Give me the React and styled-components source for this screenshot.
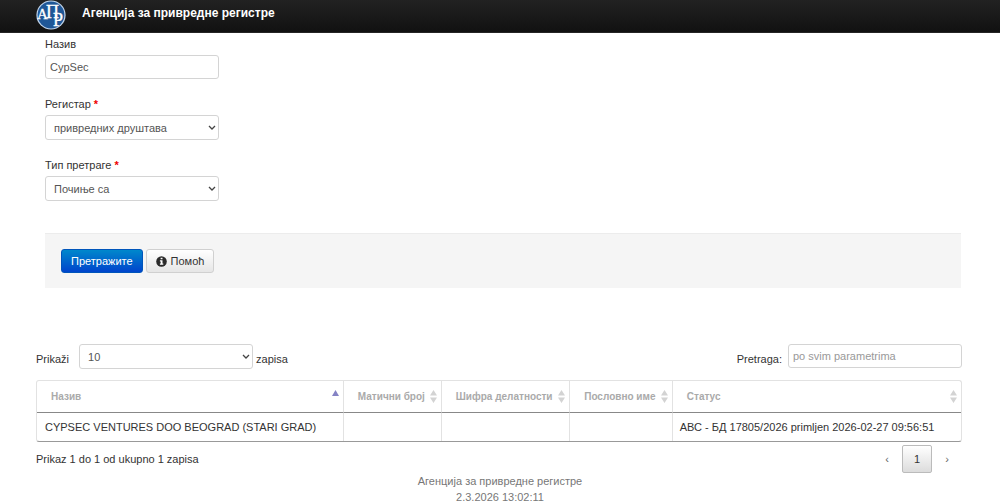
import { useState } from 'react';

import styled, { createGlobalStyle } from 'styled-components';

const columns = [
  { name: 'Назив', width: '33.1%' },
  { name: 'Матични број', width: '10.6%' },
  { name: 'Шифра делатности', width: '13.9%' },
  { name: 'Пословно име', width: '11.1%' },
  { name: 'Статус', width: '31.3%' },
];

const rows = [
  ['CYPSEC VENTURES DOO BEOGRAD (STARI GRAD)', '', '', '', 'АВС - БД 17805/2026 primljen 2026-02-27 09:56:51'],
];

const Logo = () => (
  <svg width="30" height="30" viewBox="0 0 30 30" aria-hidden="true">
    <circle cx="15" cy="15" r="14.6" fill="#c3d6ec" />
    <circle cx="15" cy="15" r="13.4" fill="#1f5797" />
    <g fill="#fff" stroke="#fff" strokeWidth="0.3" fontFamily="'Liberation Serif', serif">
      <text x="1" y="19" fontSize="15">А</text>
      <text x="10" y="18" fontSize="18">П</text>
      <text x="17" y="26" fontSize="18">Р</text>
    </g>
  </svg>
);

const InfoIcon = () => (
  <svg width="11" height="11" viewBox="0 0 11 11" aria-hidden="true">
    <circle cx="5.5" cy="5.5" r="5.3" fill="#2b2b2b" />
    <path d="M4.6 1.8h1.9v1.5H4.6zM3.9 4.3h2.6v3.3h.8v1.1H3.9V7.6h.8V5.4h-.8z" fill="#fff" />
  </svg>
);

const Chevron = () => (
  <svg width="8" height="6" viewBox="0 0 8 6" aria-hidden="true">
    <path d="M1 1l3 3 3-3" fill="none" stroke="#444" strokeWidth="1.3" />
  </svg>
);

const SortIcon = ({ active }) => (
  <svg width="7" height="13" viewBox="0 0 7 13" aria-hidden="true">
    {active
      ? <path d="M3.5 0L7 6H0z" fill="#8583c5" />
      : <path d="M3.5 0L7 5.5H0zM0 7.5h7L3.5 13z" fill="#d3d3d3" />}
  </svg>
);

const Dropdown = ({ id, options }) => (
  <SelectBox>
    <Select id={id}>
      {options.map((option) => <option key={option}>{option}</option>)}
    </Select>
    <Chevron />
  </SelectBox>
);

const App = () => {
  const [name, setName] = useState('CypSec');
  const [filter, setFilter] = useState('');
  const [sorted, setSorted] = useState(0);

  return (
    <>
      <GlobalStyle />
      <Navbar>
        <Logo />
        <Brand href="#">Агенција за привредне регистре</Brand>
      </Navbar>
      <SearchForm onSubmit={(e) => e.preventDefault()}>
        <Field>
          <Label htmlFor="name">Назив</Label>
          <Input id="name" value={name} onChange={(e) => setName(e.target.value)} />
        </Field>
        <Field>
          <Label htmlFor="register">Регистар <Required>*</Required></Label>
          <Dropdown id="register" options={['привредних друштава']} />
        </Field>
        <Field>
          <Label htmlFor="type">Тип претраге <Required>*</Required></Label>
          <Dropdown id="type" options={['Почиње са']} />
        </Field>
        <Actions>
          <Button type="submit" $primary>Претражите</Button>
          <Button type="button"><InfoIcon />Помоћ</Button>
        </Actions>
      </SearchForm>
      <Results>
        <Toolbar>
          <ToolGroup>
            <ToolLabel htmlFor="length" $gap="10px">Prikaži</ToolLabel>
            <Dropdown id="length" options={['10', '25', '50']} />
            <Suffix>zapisa</Suffix>
          </ToolGroup>
          <ToolGroup>
            <ToolLabel htmlFor="filter" $gap="6px">Pretraga:</ToolLabel>
            <Input
              id="filter"
              placeholder="po svim parametrima"
              value={filter}
              onChange={(e) => setFilter(e.target.value)}
            />
          </ToolGroup>
        </Toolbar>
        <Table>
          <colgroup>
            {columns.map((column) => <Col key={column.name} $width={column.width} />)}
          </colgroup>
          <thead>
            <tr>
              {columns.map((column, i) => (
                <Th key={column.name} onClick={() => setSorted(i)}>
                  <Heading>
                    {column.name}
                    <SortIcon active={sorted === i} />
                  </Heading>
                </Th>
              ))}
            </tr>
          </thead>
          <tbody>
            {rows.map((row) => (
              <tr key={row[0]}>
                {row.map((cell, i) => <Td key={i}>{cell}</Td>)}
              </tr>
            ))}
          </tbody>
        </Table>
        <TableFooter>
          <span>Prikaz 1 do 1 od ukupno 1 zapisa</span>
          <Pagination aria-label="Strane">
            <PageButton type="button">‹</PageButton>
            <PageButton type="button" $current>1</PageButton>
            <PageButton type="button">›</PageButton>
          </Pagination>
        </TableFooter>
      </Results>
      <Footer>
        <div>Агенција за привредне регистре</div>
        <div>2.3.2026 13:02:11</div>
      </Footer>
    </>
  );
}

const GlobalStyle = createGlobalStyle`
  * {
    box-sizing: border-box;
  }

  body {
    margin: 0;
    background: #fff;
    color: #333;
    font: 11px/16px "Liberation Sans", Arial, sans-serif;
  }

  input, select, button {
    font: inherit;
  }
`;

const Navbar = styled.header`
  display: flex;
  align-items: center;
  gap: 16px;
  height: 33px;
  padding: 0 36px 3px;
  background: linear-gradient(#222, #111);
  border-bottom: 1px solid #252525;
`;

const Brand = styled.a`
  padding-bottom: 4px;
  color: #fff;
  font-size: 12px;
  font-weight: bold;
  text-decoration: none;
`;

const SearchForm = styled.form`
  margin: 3px 39px 0 45px;
`;

const Field = styled.div`
  margin-bottom: 17px;
`;

const Label = styled.label`
  display: block;
  margin-bottom: 3px;
`;

const Required = styled.span`
  color: #e00;
  font-weight: bold;
`;

const Input = styled.input`
  display: block;
  width: 174px;
  height: 24px;
  padding: 3px 4px;
  border: 1px solid #d4d4d4;
  border-radius: 3px;
  background: #fff;
  color: #555;

  &::placeholder {
    color: #999;
  }
`;

const SelectBox = styled.div`
  display: grid;
  align-items: center;
  width: 174px;

  select, svg {
    grid-area: 1 / 1;
  }

  svg {
    justify-self: end;
    margin-right: 3px;
    pointer-events: none;
  }
`;

const Select = styled.select`
  appearance: none;
  width: 100%;
  height: 25px;
  padding: 3px 8px;
  border: 1px solid #d4d4d4;
  border-radius: 3px;
  background: #fff;
  color: #555;
`;

const Actions = styled.div`
  display: flex;
  gap: 3px;
  margin-top: 32px;
  padding: 15px 16px;
  background: #f5f5f5;
  border-top: 1px solid #ececec;
`;

const Button = styled.button`
  display: flex;
  align-items: center;
  gap: 4px;
  height: 24px;
  padding: 0 9px;
  border: 1px solid ${props => props.$primary ? '#05b' : '#d0d0d0'};
  border-radius: 3px;
  background: ${props => props.$primary ? 'linear-gradient(#08c, #04c)' : 'linear-gradient(#fff, #e6e6e6)'};
  color: ${props => props.$primary ? '#fff' : '#333'};
`;

const Results = styled.main`
  margin: 56px 38px 0 36px;
`;

const Toolbar = styled.div`
  display: flex;
  justify-content: space-between;
  margin-bottom: 11px;
`;

const ToolGroup = styled.div`
  display: flex;
`;

const ToolLabel = styled.label`
  padding-top: 7px;
  margin-right: ${props => props.$gap};
`;

const Suffix = styled.span`
  padding-top: 7px;
  margin-left: 3px;
`;

const Table = styled.table`
  width: 100%;
  table-layout: fixed;
  border: 1px solid #e2e2e2;
  border-bottom-color: #999;
  border-radius: 3px;
  border-spacing: 0;
`;

const Col = styled.col`
  width: ${props => props.$width};
`;

const Th = styled.th`
  height: 32px;
  padding: 0 4px 0 14px;
  border-bottom: 1px solid #888;
  color: #aaa;
  font-size: 10px;
  text-align: left;
  white-space: nowrap;
  cursor: pointer;

  & + & {
    border-left: 1px solid #e2e2e2;
  }
`;

const Heading = styled.div`
  display: flex;
  align-items: center;
  justify-content: space-between;
`;

const Td = styled.td`
  height: 28px;
  padding: 0 8px;
  white-space: nowrap;

  & + & {
    border-left: 1px solid #e2e2e2;
    padding-left: 7px;
  }
`;

const TableFooter = styled.div`
  display: flex;
  align-items: center;
  justify-content: space-between;
  margin-top: 3px;
`;

const Pagination = styled.nav`
  display: flex;
`;

const PageButton = styled.button`
  width: 30px;
  height: 28px;
  padding: 0;
  border: 1px solid ${props => props.$current ? '#bbb' : 'transparent'};
  border-radius: 2px;
  background: ${props => props.$current ? 'linear-gradient(#fff, #dcdcdc)' : 'transparent'};
  color: ${props => props.$current ? '#333' : '#666'};
`;

const Footer = styled.footer`
  color: #777;
  text-align: center;
`;

export default App;
